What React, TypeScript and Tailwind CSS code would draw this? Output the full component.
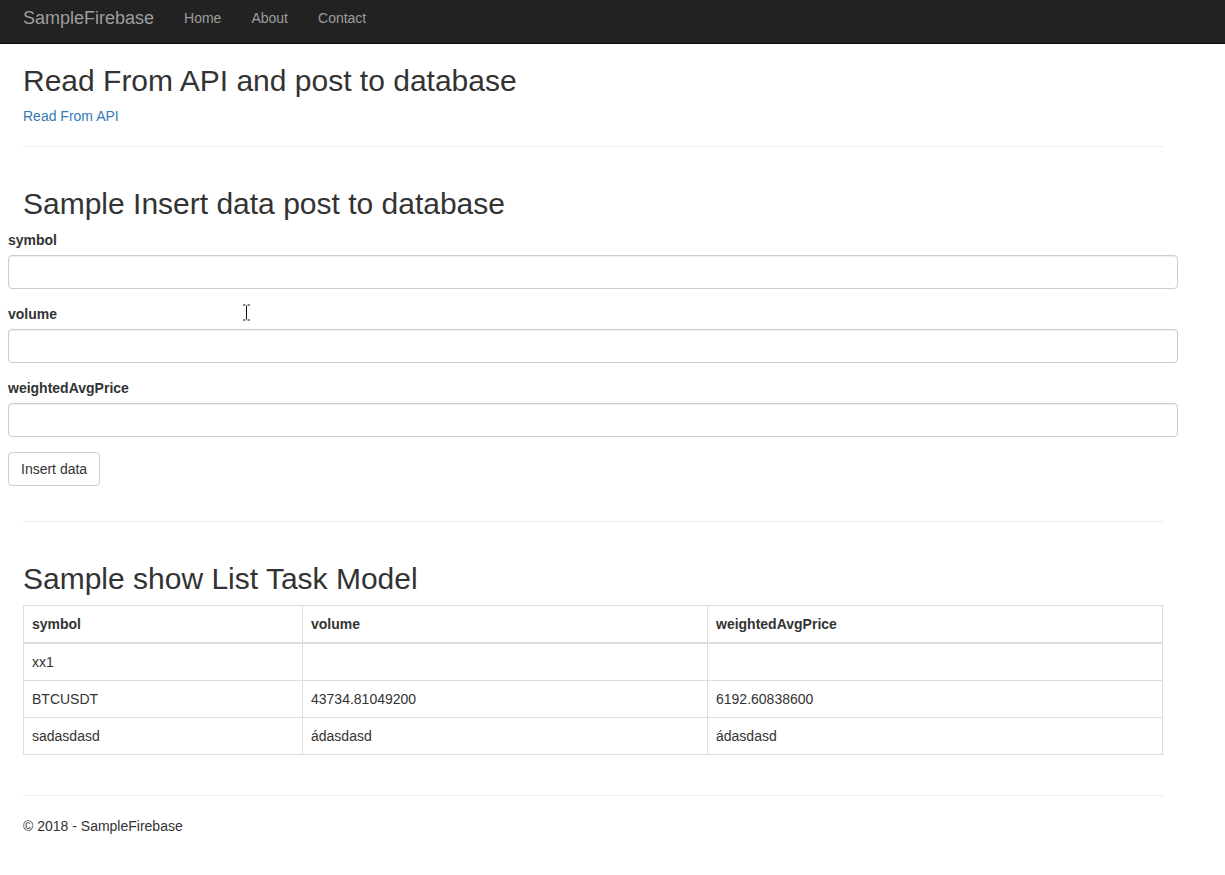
import React from 'react';

const rows = [
  { symbol: 'xx1', volume: '', price: '' },
  { symbol: 'BTCUSDT', volume: '43734.81049200', price: '6192.60838600' },
  { symbol: 'sadasdasd', volume: 'ádasdasd', price: 'ádasdasd' },
];

const fields = ['symbol', 'volume', 'weightedAvgPrice'];

export default function App() {
  return (
    <div className="min-h-[875px] bg-white text-[14px] leading-[20px] text-[#333] font-['Liberation_Sans',Arial,sans-serif]">
      <nav className="h-[44px] bg-[#222] border-b border-[#080808]">
        <div className="ml-[8px] w-[1170px] flex items-start">
          <a className="pl-[15px] pr-[15px] pt-[8px] text-[18px] leading-[20px] text-[#9d9d9d]">SampleFirebase</a>
          <ul className="flex">
            {['Home', 'About', 'Contact'].map((l) => (
              <li key={l}>
                <a className="block px-[15px] pt-[8px] leading-[20px] text-[#9d9d9d]">{l}</a>
              </li>
            ))}
          </ul>
        </div>
      </nav>

      <div className="ml-[8px] w-[1170px] pt-[20px] relative">
        <div className="px-[15px]">
          <h2 className="mb-[10px] text-[30px] leading-[33px] font-normal">Read From API and post to database</h2>
          <a className="block -mt-[1px] text-[#337ab7]">Read From API</a>
          <hr className="mt-[20px] mb-[40px] border-t border-[#eee]" />
          <h2 className="mb-[10px] text-[30px] leading-[33px] font-normal">Sample Insert data post to database</h2>
        </div>

        <form>
          {fields.map((f) => (
            <div key={f} className="mb-[15px]">
              <label className="block mb-[5px] font-bold">{f}</label>
              <input
                type="text"
                className="block w-full h-[34px] px-[12px] py-[6px] border border-[#ccc] rounded-[4px] shadow-[inset_0_1px_1px_rgba(0,0,0,0.075)] outline-none"
              />
            </div>
          ))}
          <button
            type="button"
            className="h-[34px] px-[12px] py-[6px] border border-[#ccc] rounded-[4px] bg-white text-[#333] leading-[20px]"
          >
            Insert data
          </button>
        </form>

        <div className="px-[15px]">
          <hr className="mt-[35px] mb-[40px] border-t border-[#eee]" />
          <h2 className="mb-[10px] text-[30px] leading-[33px] font-normal">Sample show List Task Model</h2>
          <table className="w-full border-collapse border border-[#ddd]">
            <thead>
              <tr>
                <th className="w-[279px] text-left font-bold p-[8px] border border-[#ddd] border-b-2">symbol</th>
                <th className="w-[405px] text-left font-bold p-[8px] border border-[#ddd] border-b-2">volume</th>
                <th className="text-left font-bold p-[8px] border border-[#ddd] border-b-2">weightedAvgPrice</th>
              </tr>
            </thead>
            <tbody>
              {rows.map((r) => (
                <tr key={r.symbol}>
                  <td className="p-[8px] h-[37px] border border-[#ddd]">{r.symbol}</td>
                  <td className="p-[8px] h-[37px] border border-[#ddd]">{r.volume}</td>
                  <td className="p-[8px] h-[37px] border border-[#ddd]">{r.price}</td>
                </tr>
              ))}
            </tbody>
          </table>
          <hr className="mt-[40px] mb-[20px] border-t border-[#eee]" />
          <footer>
            <p>© 2018 - SampleFirebase</p>
          </footer>
        </div>

        {/* mouse cursor */}
        <svg className="absolute left-[234px] top-[260px]" width="9" height="17" viewBox="0 0 9 17">
          <path d="M1 1h2.5M5.5 1H8M4.5 1.5v14M1 16h2.5M5.5 16H8" stroke="#111" strokeWidth="1" fill="none" />
        </svg>
      </div>
    </div>
  );
}
